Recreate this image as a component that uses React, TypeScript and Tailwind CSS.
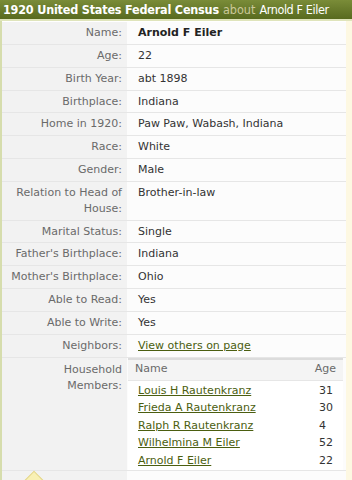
import React from 'react';

interface Field {
  label: string[];
  value: string;
  bold?: boolean;
  link?: boolean;
}

const fields: Field[] = [
  { label: ['Name:'], value: 'Arnold F Eiler', bold: true },
  { label: ['Age:'], value: '22' },
  { label: ['Birth Year:'], value: 'abt 1898' },
  { label: ['Birthplace:'], value: 'Indiana' },
  { label: ['Home in 1920:'], value: 'Paw Paw, Wabash, Indiana' },
  { label: ['Race:'], value: 'White' },
  { label: ['Gender:'], value: 'Male' },
  { label: ['Relation to Head of', 'House:'], value: 'Brother-in-law' },
  { label: ['Marital Status:'], value: 'Single' },
  { label: ["Father's Birthplace:"], value: 'Indiana' },
  { label: ["Mother's Birthplace:"], value: 'Ohio' },
  { label: ['Able to Read:'], value: 'Yes' },
  { label: ['Able to Write:'], value: 'Yes' },
  { label: ['Neighbors:'], value: 'View others on page', link: true },
];

const members = [
  { name: 'Louis H Rautenkranz', age: '31' },
  { name: 'Frieda A Rautenkranz', age: '30' },
  { name: 'Ralph R Rautenkranz', age: '4' },
  { name: 'Wilhelmina M Eiler', age: '52' },
  { name: 'Arnold F Eiler', age: '22' },
];

export default function App() {
  return (
    <div className="w-[352px] h-[480px] overflow-hidden bg-[#fdf8e2] font-['DejaVu_Sans',Verdana,sans-serif] text-[11px]">
      {/* Title bar */}
      <div className="h-[19px] px-[3px] flex items-center whitespace-nowrap bg-gradient-to-b from-[#7a8c38] to-[#586a1f] text-white text-[12.5px] leading-[19px] font-['DejaVu_Sans_Condensed','DejaVu_Sans',sans-serif] font-stretch-condensed">
        <span className="font-bold tracking-[-0.2px]">1920 United States Federal Census</span>
        <span className="ml-[4px] text-[#cbc89a]">about</span>
        <span className="ml-[4px] tracking-[-0.4px]">Arnold F Eiler</span>
      </div>
      <div className="h-[2px] bg-[#dfe4bb]"></div>

      <div className="ml-[2px] mr-[6px] bg-white relative pt-[1px]">
        <div className="absolute left-[-2px] top-0 bottom-0 w-[2px] bg-[#d6ddad]"></div>
        {fields.map((f) => (
          <div key={f.label.join(' ')} className="grid grid-cols-[125px_1fr] border-b border-[#e6e6e6]">
            <div className="bg-[#f2f2f2] text-right pr-[5px] py-[3px] leading-[15.85px] text-[#6a6a6a]">
              {f.label.map((l) => (
                <div key={l}>{l}</div>
              ))}
            </div>
            <div className="bg-[#fcfcfc] pl-[11px] py-[3px] leading-[15.85px] text-[#333]">
              {f.link ? (
                <span className="underline text-[#4b5e10]">{f.value}</span>
              ) : (
                <span className={f.bold ? 'font-bold text-[#222]' : ''}>{f.value}</span>
              )}
            </div>
          </div>
        ))}

        {/* Household members */}
        <div className="grid grid-cols-[125px_1fr] border-b border-[#e6e6e6]">
          <div className="bg-[#f2f2f2] text-right pr-[5px] pt-[4px] leading-[16px] text-[#6a6a6a]">
            <div>Household</div>
            <div>Members:</div>
          </div>
          <div className="pl-[1px] pr-[3px] bg-[#fcfcfc]">
            <div className="border-t-2 border-[#dcdcdc] bg-[#f4f4f4] flex justify-between h-[23px] items-center pl-[7px] pr-[7px] text-[#6a6a6a] border-b border-b-[#e6e6e6]">
              <span>Name</span>
              <span>Age</span>
            </div>
            <div className="pt-[2px] bg-white">
              {members.map((m) => (
                <div key={m.name} className="flex h-[17.4px] items-center pl-[10px]">
                  <span className="underline text-[#4b5e10] flex-1">{m.name}</span>
                  <span className="w-[24px] text-[#333]">{m.age}</span>
                </div>
              ))}
            </div>
          </div>
        </div>

        <div className="grid grid-cols-[125px_1fr] h-[20px] relative">
          <div className="bg-[#f2f2f2]"></div>
          <div className="bg-[#fcfcfc]"></div>
          <div className="absolute left-[24px] top-[3px] w-[16px] h-[16px] rotate-45 bg-[#f8f0b4] border border-[#e3d58c]"></div>
        </div>
      </div>
    </div>
  );
}
